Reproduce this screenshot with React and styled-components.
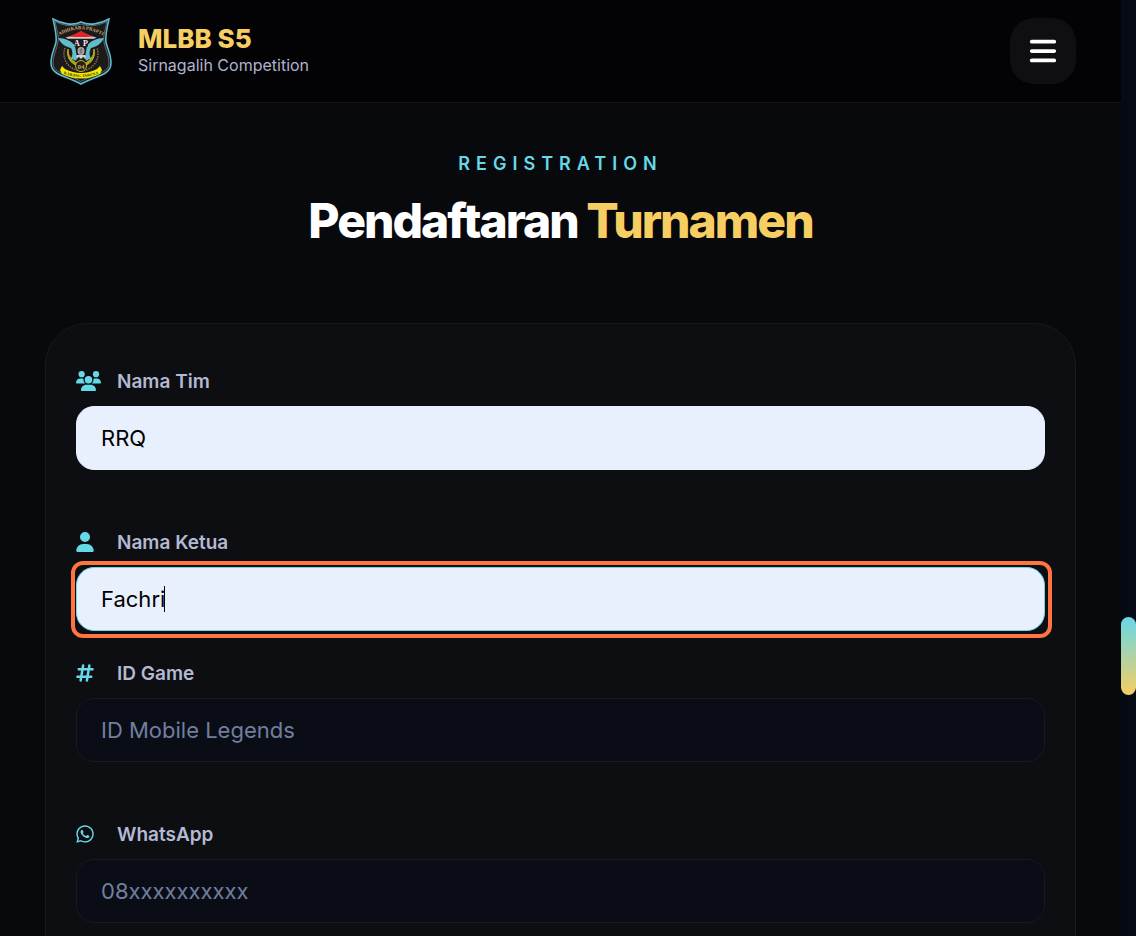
import React from "react";
import styled, { createGlobalStyle } from "styled-components";
import { FaBars, FaHashtag, FaUser, FaUsers, FaWhatsapp } from "react-icons/fa6";

const GlobalStyle = createGlobalStyle`
  *, *::before, *::after { box-sizing: border-box; }
  body {
    margin: 0;
    background: #07090d;
    color: #ffffff;
    font-family: Inter, "Liberation Sans", sans-serif;
  }
`;

const Window = styled.div`
  display: grid;
  grid-template-columns: minmax(0, 1fr) 15px;
  height: 100vh;
  overflow: hidden;
`;

const Page = styled.div`
  min-width: 0;
  overflow: hidden;
  background: #07090d;
`;

const ScrollTrack = styled.div`
  display: grid;
  grid-template-rows: 617fr 78fr 241fr;
  background: #060a14;
`;

const ScrollThumb = styled.div`
  grid-row: 2;
  border-radius: 8px;
  background: linear-gradient(#67d8e8, #f6ce62);
`;

const Header = styled.header`
  display: flex;
  align-items: center;
  justify-content: space-between;
  padding: 18px 45px;
  background: #030305;
  border-bottom: 1px solid #121316;
`;

const Brand = styled.a`
  display: flex;
  align-items: center;
  gap: 21px;
  color: inherit;
  text-decoration: none;
`;

const LogoBox = styled.span`
  display: grid;
  place-items: center;
  width: 72px;
  height: 66px;
`;

const BrandText = styled.span`
  display: flex;
  flex-direction: column;
`;

const BrandName = styled.span`
  color: #f6ce62;
  font-size: 26px;
  font-weight: 800;
  line-height: 28px;
`;

const BrandTag = styled.span`
  color: #aeb4cc;
  font-size: 16px;
  line-height: 24px;
`;

const MenuButton = styled.button`
  display: grid;
  place-items: center;
  width: 66px;
  height: 66px;
  padding: 0;
  border: 0;
  border-radius: 24px;
  background: #0f0f11;
  color: #ffffff;
  font-size: 30px;
`;

const Main = styled.main`
  padding: 48px 45px;
`;

const Heading = styled.div`
  display: flex;
  flex-direction: column;
  align-items: center;
  gap: 13px;
  padding-bottom: 71px;
  text-align: center;
`;

const Eyebrow = styled.p`
  margin: 0;
  color: #67d8e8;
  font-size: 18px;
  font-weight: 600;
  line-height: 26px;
  letter-spacing: 6px;
`;

const Title = styled.h1`
  margin: 0;
  font-size: 48px;
  font-weight: 800;
  line-height: 62px;
  letter-spacing: -2px;
`;

const Accent = styled.span`
  color: #f6ce62;
`;

const Card = styled.form`
  display: flex;
  flex-direction: column;
  gap: 59px;
  padding: 44px 30px 90px;
  border: 1px solid #191a1e;
  border-radius: 42px;
  background: #0d0e12;
`;

const FieldGroup = styled.div`
  display: flex;
  flex-direction: column;
  gap: 29px;
`;

const Field = styled.div`
  display: flex;
  flex-direction: column;
  gap: 11px;
`;

const Label = styled.label`
  display: grid;
  grid-template-columns: 25px 1fr;
  gap: 16px;
  align-items: center;
  color: #b4b9d2;
  font-size: 19px;
  font-weight: 600;
  line-height: 27px;
`;

const LabelIcon = styled.span`
  display: block;
  height: 22px;
  color: #67d8e8;

  svg {
    display: block;
    width: ${(p) => (p.$wide ? 25 : 18)}px;
    height: 20px;
  }
`;

const Control = styled.div`
  position: relative;
`;

const Input = styled.input`
  display: block;
  width: 100%;
  height: 64px;
  padding: 0 24px;
  border: 1px solid
    ${(p) => (p.$active ? "#67d8e8" : p.$filled ? "#e8f0fe" : "#181a20")};
  border-radius: 18px;
  outline: none;
  background: ${(p) => (p.$filled ? "#e8f0fe" : "#0a0d15")};
  color: #000000;
  font-family: inherit;
  font-size: 22px;

  &::placeholder {
    color: #717f9f;
    opacity: 1;
  }
`;

const FocusRing = styled.span`
  position: absolute;
  inset: -6px -7px -7px -5px;
  border: 4px solid #ff7440;
  border-radius: 12px;
  pointer-events: none;
`;

const Caret = styled.span`
  position: absolute;
  top: 19px;
  left: 88px;
  width: 1px;
  height: 26px;
  background: #000000;
`;

function Crest() {
  return (
    <svg width="62" height="68" viewBox="0 0 62 68" role="img" aria-label="Adhikara Prapti">
      <path
        d="M3 1 C12 6 23 8 31 4 C39 8 50 6 59 1 C57 10 55 18 56 24 C57 30 61 36 61 45 C61 58 44 58 31 66 C18 58 1 58 1 45 C1 36 5 30 6 24 C7 18 5 10 3 1Z"
        fill="#1d1a1c"
        stroke="#59bccd"
        strokeWidth="1.6"
      />
      <path
        d="M5 3.500 C14 8 23 9 31 6 C39 9 48 8 57 3.500 C55 12 53 18 54 24 C55 31 59 37 59 45 C59 56 43 56 31 63.500 C19 56 3 56 3 45 C3 37 7 31 8 24 C9 18 7 12 5 3.500Z"
        fill="none"
        stroke="#9bb2b8"
        strokeWidth="0.500"
      />
      <defs>
        <path id="crest-arc" d="M8 18.500 Q31 4 54 18.500" />
        <path id="crest-ribbon" d="M14 56 Q31 62 48 56" />
      </defs>
      <text fill="#d0ad75" fontFamily="Liberation Serif, serif" fontSize="4.800" fontWeight="700">
        <textPath href="#crest-arc" startOffset="50%" textAnchor="middle">ADHIKARA PRAPTI</textPath>
      </text>
      <path d="M15 30 A17 17 0 1 0 47 30" fill="none" stroke="#8a704d" strokeWidth="1.500" strokeDasharray="1.500 1" />
      <path d="M18 31 A13.500 13.500 0 1 0 44 31 A14 14 0 0 1 31 46 A14 14 0 0 1 18 31Z" fill="#b5ad12" stroke="#b5ad12" strokeWidth="1" />
      <path d="M8 20 C15 20 22 23 25 28 C26 33 26 37 28 40 L25 43 C24 41 22 41 20 42 C23 38 23 34 21 30 C16 29 11 26 8 20Z" fill="#62bdcb" />
      <path d="M54 20 C47 20 40 23 37 28 C36 33 36 37 34 40 L37 43 C38 41 40 41 42 42 C39 38 39 34 41 30 C46 29 51 26 54 20Z" fill="#62bdcb" />
      <path d="M15.500 19.500 Q31 14 46.500 19.500 L44 20.800 H18Z" fill="#d5c9ca" />
      <path d="M19 18.500 L28 14.500 L31 12.800 L34 14.500 L43 18.500 Q31 19.500 19 18.500Z" fill="#df242b" />
      <path d="M24 21.500 H38 V28.500 H24Z" fill="#1d1a1c" />
      <g fill="#f0f0ef" fontFamily="Liberation Serif, serif" fontSize="8" fontWeight="700">
        <text x="24" y="28">A</text>
        <text x="33" y="28">P</text>
      </g>
      <ellipse cx="31" cy="33" rx="3.500" ry="4" fill="#aaa9aa" />
      <path d="M29 32 H33 M29.500 34 H32.500 M31 30 V36" stroke="#59575a" strokeWidth="0.700" />
      <path d="M27 37 H35 L36 39 L34 40 L33 38.500 L32 40.500 H30 L29 38.500 L28 40 L26 39Z" fill="#d6d4d4" />
      <circle cx="31" cy="48" r="5.500" fill="#252018" stroke="#c1b614" strokeWidth="1" />
      <text x="31" y="50.500" fill="#c9a56e" fontFamily="Liberation Serif, serif" fontSize="7" fontWeight="700" textAnchor="middle">04</text>
      <path d="M12 48 L15 51 Q31 59 47 51 L50 48 L52 52 L50 56 Q31 65 12 56 L10 52Z" fill="#f2e900" />
      <text fill="#343014" fontFamily="Liberation Serif, serif" fontSize="4" fontWeight="700">
        <textPath href="#crest-ribbon" startOffset="50%" textAnchor="middle">KARANG TARUNA</textPath>
      </text>
    </svg>
  );
}

function TextField({ id, label, icon: Icon, wideIcon, active, ...inputProps }) {
  return (
    <Field>
      <Label htmlFor={id}>
        <LabelIcon $wide={wideIcon} aria-hidden="true">
          <Icon />
        </LabelIcon>
        {label}
      </Label>
      <Control>
        <Input
          id={id}
          name={id}
          type="text"
          $active={active}
          $filled={Boolean(inputProps.defaultValue)}
          {...inputProps}
        />
        {active && <Caret />}
        {active && <FocusRing />}
      </Control>
    </Field>
  );
}

export default function App() {
  return (
    <>
      <GlobalStyle />
      <Window>
        <Page>
          <Header>
            <Brand href="#home">
              <LogoBox>
                <Crest />
              </LogoBox>
              <BrandText>
                <BrandName>MLBB S5</BrandName>
                <BrandTag>Sirnagalih Competition</BrandTag>
              </BrandText>
            </Brand>
            <MenuButton type="button" aria-label="Menu">
              <FaBars />
            </MenuButton>
          </Header>
          <Main>
            <Heading>
              <Eyebrow>REGISTRATION</Eyebrow>
              <Title>
                Pendaftaran <Accent>Turnamen</Accent>
              </Title>
            </Heading>
            <Card>
              <TextField id="team" label="Nama Tim" icon={FaUsers} wideIcon defaultValue="RRQ" />
              <FieldGroup>
                <TextField id="leader" label="Nama Ketua" icon={FaUser} defaultValue="Fachri" active />
                <TextField id="game-id" label="ID Game" icon={FaHashtag} placeholder="ID Mobile Legends" />
              </FieldGroup>
              <TextField id="whatsapp" label="WhatsApp" icon={FaWhatsapp} placeholder="08xxxxxxxxxx" />
            </Card>
          </Main>
        </Page>
        <ScrollTrack aria-hidden="true">
          <ScrollThumb />
        </ScrollTrack>
      </Window>
    </>
  );
}
